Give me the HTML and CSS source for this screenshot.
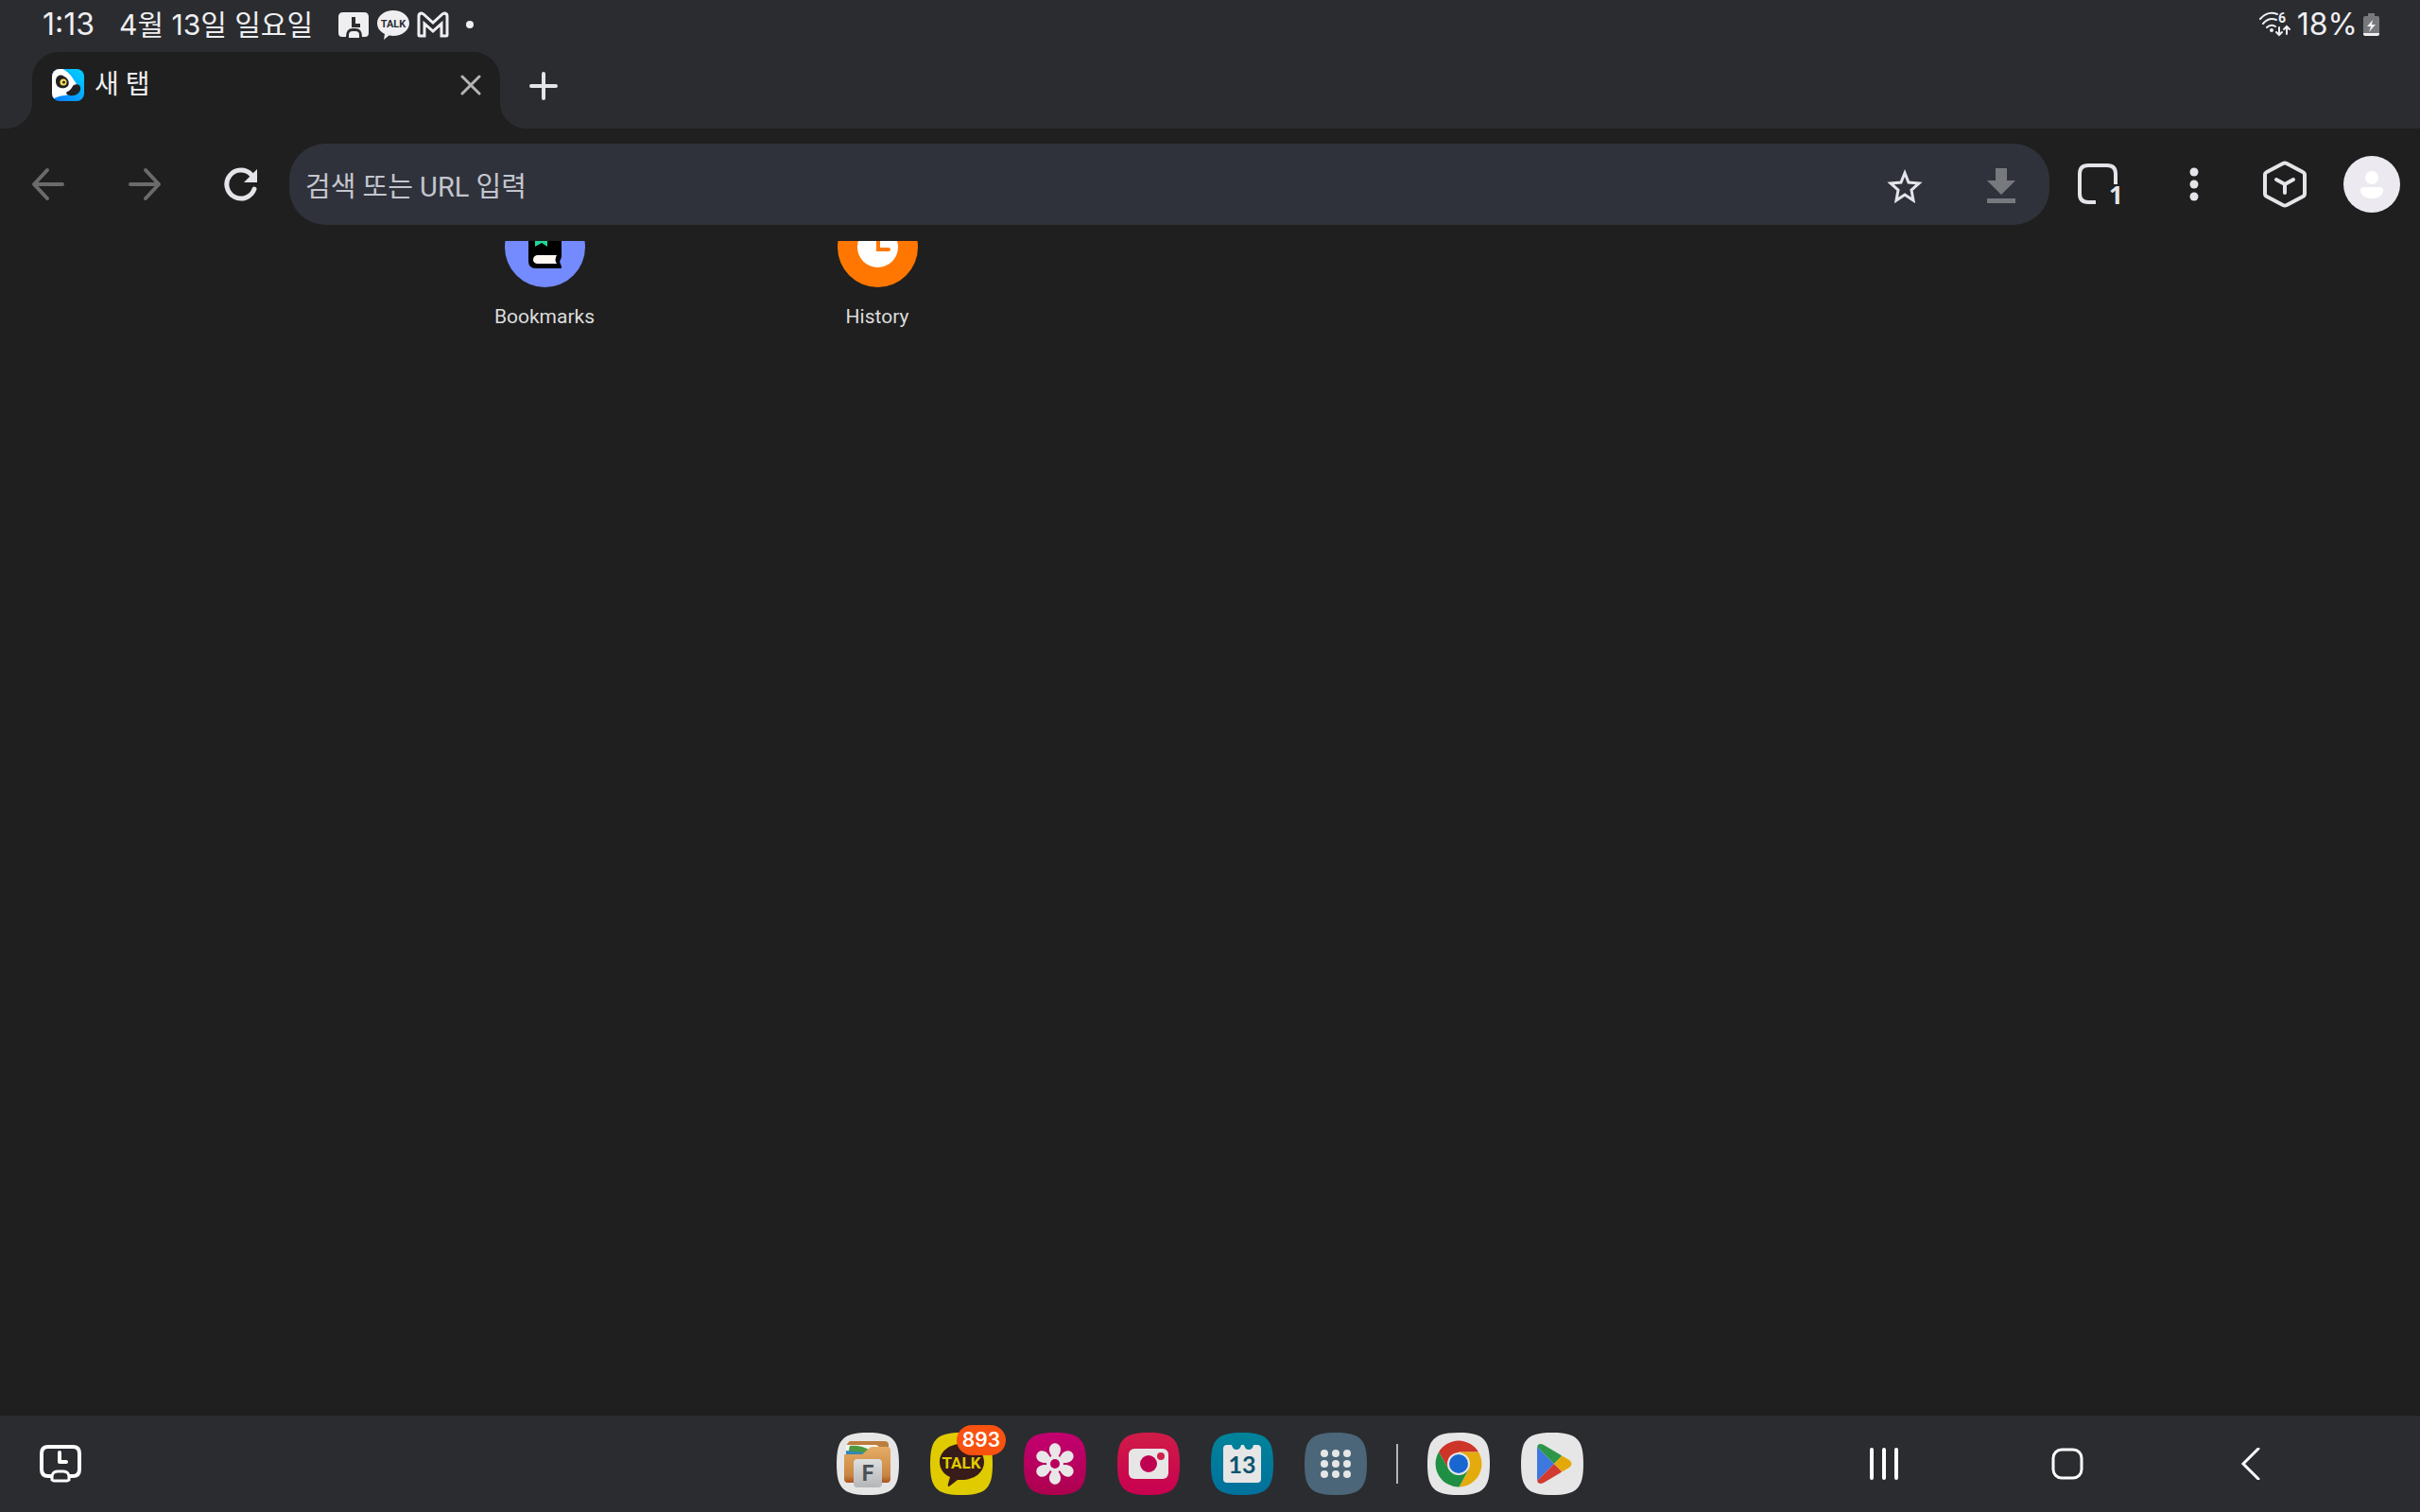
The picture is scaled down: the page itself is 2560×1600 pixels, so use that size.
FILE: index.html
```
<!DOCTYPE html>
<html lang="ko">
<head>
  <meta charset="UTF-8">
  <meta name="viewport" content="width=device-width, initial-scale=1.0">
  <title>새 탭</title>
  <link rel="stylesheet" href="styles.css">
</head>
<body>
  <header class="top">
    <div class="status-bar">
      <span class="clock">1:13</span>
      <span class="date">4월 13일 일요일</span>
      <div class="notifications">
        <svg width="34" height="34" viewBox="0 0 34 34">
          <path fill="#efeff1" fill-rule="evenodd" d="M6 4h22q5 0 5 5v17q0 4-4 4h-3q0-9-7-9h-3q-7 0-7 9H5q-4 0-4-4V9q0-5 5-5zM15 9v11h9v-4h-5V9z"/>
          <path fill="#efeff1" d="M12 31v-3q0-4 4-4h3q4 0 4 4v3z"/>
        </svg>
        <svg width="34" height="34" viewBox="0 0 34 34">
          <path fill="#efeff1" d="M17 2c9.500 0 17 6 17 13.500S26.500 29 17 29c-1.500 0-3 0-4.500-.4L7 33l1-6C3 24.500 0 20.500 0 15.500 0 8 7.500 2 17 2z"/>
          <text class="talk-small" x="17" y="20" text-anchor="middle">TALK</text>
        </svg>
        <svg width="34" height="34" viewBox="0 0 34 34">
          <path class="gmail-line" d="M2 28V8q0-3 3-3l2 1 10 9L27 6l2-1q3 0 3 3v20q0 1-1 1h-5V16l-9 8-9-8v13H3q-1 0-1-1z"/>
        </svg>
        <svg width="34" height="34" viewBox="0 0 34 34">
          <circle cx="14" cy="17" r="4" fill="#efeff1"/>
        </svg>
      </div>
      <div class="battery">
        <svg width="34" height="28" viewBox="0 0 34 28">
          <path class="wifi-line" d="M1 8Q9-1 19 3M4 13q6-7 14-4M8 17q4-4 9-1"/>
          <circle cx="13" cy="20" r="2" fill="#efeff1"/>
          <text class="wifi-gen" x="20" y="12">6</text>
          <path class="wifi-arrow" d="M21 17v8m-3-3 3 3 3-3M29 24v-8m-3 3 3-3 3 3"/>
        </svg>
        <span class="battery-level">18%</span>
        <svg width="17" height="24" viewBox="0 0 17 24">
          <path fill="#77787b" d="M5 0h7v3h3q2 0 2 2v16H0V5q0-2 2-2h3z"/>
          <path fill="#efeff1" d="M0 21h17v1q0 2-2 2H2q-2 0-2-2zM10 7l-6 7h4l-2 6 7-8H9z"/>
        </svg>
      </div>
    </div>
    <div class="tab-strip">
      <div class="tab">
        <svg class="favicon" width="34" height="34" viewBox="0 0 34 34">
          <defs>
            <linearGradient id="favBg" x1="1" y1="0" x2="0" y2="1">
              <stop offset="0" stop-color="#00d5ff"/>
              <stop offset="1" stop-color="#0a78ff"/>
            </linearGradient>
            <clipPath id="favClip"><rect width="34" height="34" rx="8"/></clipPath>
          </defs>
          <g clip-path="url(#favClip)">
            <rect width="34" height="34" fill="url(#favBg)"/>
            <path fill="#fff" d="M0 0h11c5 2 9 6 13 13 4 5 3 10-3 13-7 3-13 1-20 6H0z"/>
            <path fill="#222" d="M4 13c0-6 5-8 9-5 4 2 6 6 4 10-4 4-13 3-13-5z"/>
            <path fill="#222" d="M23 17c4-2 8 0 7 5-1 4-6 7-11 6-3 0-5-3-3-4 4-1 5-5 7-7z"/>
            <circle cx="12" cy="14" r="3.500" fill="#ffdf5c"/>
            <circle cx="12.500" cy="14" r="1.500" fill="#222"/>
          </g>
        </svg>
        <span class="tab-title">새 탭</span>
        <button class="icon-button tab-close" aria-label="탭 닫기">
          <svg width="22" height="22" viewBox="0 0 22 22"><path class="line close-line" d="M2 2l18 18M20 2 2 20"/></svg>
        </button>
      </div>
      <button class="icon-button new-tab" aria-label="새 탭 열기">
        <svg width="30" height="30" viewBox="0 0 30 30"><path class="line" d="M15 2v26M2 15h26"/></svg>
      </button>
    </div>
  </header>

  <div class="toolbar">
    <button class="icon-button nav-button" aria-label="뒤로">
      <svg width="36" height="36" viewBox="0 0 36 36"><path class="line dim" d="M33 18H3M17 3 3 18l14 15"/></svg>
    </button>
    <button class="icon-button nav-button" aria-label="앞으로">
      <svg width="36" height="36" viewBox="0 0 36 36"><path class="line dim" d="M3 18h30M19 3l14 15-14 15"/></svg>
    </button>
    <button class="icon-button nav-button" aria-label="새로고침">
      <svg width="36" height="36" viewBox="0 0 36 36">
        <path class="line reload-line" d="M32 23A15 15 0 1 1 29 8"/>
        <path fill="#e5e4e9" d="M35 2v14H21z"/>
      </svg>
    </button>
    <div class="url-bar">
      <input type="text" class="url-input" placeholder="검색 또는 URL 입력" aria-label="검색 또는 URL 입력">
      <button class="icon-button url-action" aria-label="북마크 추가">
        <svg width="38" height="38" viewBox="0 0 38 38"><path fill="none" stroke="#e5e4e9" stroke-width="3" d="M19 5l4 10 11 1-8 7 2 11-9-6-9 6 2-11-8-7 11-1z"/></svg>
      </button>
      <button class="icon-button url-action" aria-label="다운로드">
        <svg width="38" height="38" viewBox="0 0 38 38"><path fill="#77797e" d="M13 0h12v13h9L19 28 4 13h9zM4 32h30v5H4z"/></svg>
      </button>
    </div>
    <button class="icon-button tool-button" aria-label="탭 1개">
      <svg width="60" height="64" viewBox="-8 -9 60 64">
        <path fill="none" stroke="#e5e4e9" stroke-width="4" d="M20 42h-8q-9 0-9-9V12q0-9 9-9h20q9 0 9 9v11"/>
        <text class="tab-count" x="34" y="44">1</text>
      </svg>
    </button>
    <button class="icon-button tool-button" aria-label="메뉴">
      <svg width="10" height="36" viewBox="0 0 10 36">
        <circle cx="5" cy="5" r="4.500" fill="#e5e4e9"/>
        <circle cx="5" cy="18" r="4.500" fill="#e5e4e9"/>
        <circle cx="5" cy="31" r="4.500" fill="#e5e4e9"/>
      </svg>
    </button>
    <button class="icon-button wallet-button" aria-label="지갑">
      <svg width="48" height="52" viewBox="0 0 48 52">
        <path class="line hex-line" d="M22 4q2-1 4 0l17 9q2 1 2 3v20q0 2-2 3l-17 9q-2 1-4 0L5 39q-2-1-2-3V16q0-2 2-3zM15 21l9 5 9-5M24 26v9"/>
      </svg>
    </button>
    <button class="icon-button avatar" aria-label="프로필">
      <svg width="60" height="60" viewBox="0 0 60 60">
        <circle cx="30" cy="30" r="30" fill="#eceaf0"/>
        <circle cx="30" cy="23" r="7" fill="#fff"/>
        <path fill="#fff" d="M22 33h16q4 0 4 3c0 6-6 9-12 9s-12-3-12-9q0-3 4-3z"/>
      </svg>
    </button>
  </div>

  <main class="page">
    <div class="shortcuts">
      <a href="#bookmarks" class="shortcut">
        <!-- page is scrolled, only the lower part of the circle shows -->
        <svg width="85" height="49" viewBox="0 36 85 49">
          <circle cx="42.500" cy="42.500" r="42.500" fill="#748aff"/>
          <path fill="#000" d="M25 20h35v33l-2 5 2 5v2H33q-8 0-8-8z"/>
          <path fill="#1fd79b" d="M32 20h13v22l-6-4-7 4z"/>
          <path fill="#fff8f2" d="M34 51h21q-3 5 0 9H34q-4-1-4-4 0-4 4-5z"/>
        </svg>
        <span>Bookmarks</span>
      </a>
      <a href="#history" class="shortcut">
        <svg width="85" height="49" viewBox="0 36 85 49">
          <circle cx="42.500" cy="42.500" r="42.500" fill="#ff7700"/>
          <circle cx="42.500" cy="42.500" r="21.500" fill="#fff"/>
          <path class="clock-hands" d="M43 28v17h11"/>
        </svg>
        <span>History</span>
      </a>
    </div>
  </main>

  <footer class="taskbar">
    <button class="icon-button recent-task" aria-label="화면 시간">
      <svg width="44" height="40" viewBox="0 0 44 40">
        <path class="task-line" d="M12 33H9q-7 0-7-7V9q0-7 7-7h26q7 0 7 7v17q0 7-7 7h-3"/>
        <path class="task-line" d="M21 8v10h7"/>
        <path class="task-line thin" d="M13 37q-1-9 6-9h6q7 0 6 9-1 1-2 1H15q-1 0-2-1z"/>
      </svg>
    </button>
    <div class="dock">
      <button class="icon-button app" aria-label="내 파일">
        <svg width="66" height="66" viewBox="0 0 66 66">
          <defs>
            <linearGradient id="folder" x1="0" y1="0" x2="0" y2="1">
              <stop offset="0" stop-color="#e5ac65"/>
              <stop offset="0.8" stop-color="#c98643"/>
              <stop offset="1" stop-color="#a95420"/>
            </linearGradient>
            <linearGradient id="tag" x1="0" y1="0" x2="0" y2="1">
              <stop offset="0" stop-color="#dedfe0"/>
              <stop offset="1" stop-color="#b5b6b8"/>
            </linearGradient>
          </defs>
          <path fill="#e6e6e6" d="M33 0c26 0 33 7 33 33s-7 33-33 33S0 59 0 33 7 0 33 0z"/>
          <path fill="#bd7d3d" d="M12 11q1-2 3-2h36q3 0 4 3v20H10V14z"/>
          <path fill="#f4f4ee" d="M10 13h32l3 2v10H10z"/>
          <path fill="#4c9a3f" d="M14 14q12-1 22 5v4H12z"/>
          <path fill="#3387b7" d="M10 19l20 2v3H10z"/>
          <path fill="url(#folder)" d="M8 23h19l8-7q1-1 3-1h15q4 0 4 4v30q0 4-4 4H12q-4 0-4-4z"/>
          <rect x="18" y="28" width="30" height="30" rx="4" fill="url(#tag)"/>
          <text class="file-letter" x="33" y="51" text-anchor="middle">F</text>
        </svg>
      </button>
      <button class="icon-button app" aria-label="카카오톡, 알림 893개">
        <svg width="66" height="66" viewBox="0 0 66 66">
          <path fill="#e0cb00" d="M33 0c26 0 33 7 33 33s-7 33-33 33S0 59 0 33 7 0 33 0z"/>
          <path fill="#371c19" d="M33 12c14 0 24 8 24 19S47 50 33 50h-4l-9 7q-2 0-1-3l2-7C14 44 10 38 10 31c0-11 10-19 23-19z"/>
          <text class="talk-big" x="33" y="38" text-anchor="middle">TALK</text>
        </svg>
        <span class="badge">893</span>
      </button>
      <button class="icon-button app" aria-label="갤러리">
        <svg width="66" height="66" viewBox="0 0 66 66">
          <defs>
            <linearGradient id="gallery" x1="0" y1="0" x2="0" y2="1">
              <stop offset="0" stop-color="#c30070"/>
              <stop offset="1" stop-color="#ad004f"/>
            </linearGradient>
            <path id="petal" d="M33 29c-3-3-6-7-6-11 0-9 12-9 12 0 0 4-3 8-6 11z"/>
          </defs>
          <path fill="url(#gallery)" d="M33 0c26 0 33 7 33 33s-7 33-33 33S0 59 0 33 7 0 33 0z"/>
          <g fill="#e9e6e8">
            <use href="#petal"/>
            <use href="#petal" transform="rotate(60 33 33)"/>
            <use href="#petal" transform="rotate(120 33 33)"/>
            <use href="#petal" transform="rotate(180 33 33)"/>
            <use href="#petal" transform="rotate(240 33 33)"/>
            <use href="#petal" transform="rotate(300 33 33)"/>
            <circle cx="33" cy="33" r="9"/>
          </g>
          <circle cx="33" cy="33" r="5" fill="#b8005f"/>
        </svg>
      </button>
      <button class="icon-button app" aria-label="카메라">
        <svg width="66" height="66" viewBox="0 0 66 66">
          <defs>
            <linearGradient id="camera" x1="0" y1="0" x2="0" y2="1">
              <stop offset="0" stop-color="#d01c48"/>
              <stop offset="1" stop-color="#c80050"/>
            </linearGradient>
          </defs>
          <path fill="url(#camera)" d="M33 0c26 0 33 7 33 33s-7 33-33 33S0 59 0 33 7 0 33 0z"/>
          <rect x="12" y="17" width="42" height="32" rx="6" fill="#e6e6e6"/>
          <circle cx="33" cy="33" r="9" fill="#bf0050"/>
          <circle cx="46" cy="25" r="4" fill="#cf2249"/>
        </svg>
      </button>
      <button class="icon-button app" aria-label="캘린더">
        <svg width="66" height="66" viewBox="0 0 66 66">
          <defs>
            <linearGradient id="calendar" x1="0" y1="0" x2="0" y2="1">
              <stop offset="0" stop-color="#00839a"/>
              <stop offset="1" stop-color="#00719c"/>
            </linearGradient>
          </defs>
          <path fill="url(#calendar)" d="M33 0c26 0 33 7 33 33s-7 33-33 33S0 59 0 33 7 0 33 0z"/>
          <path fill="#e6e6e6" d="M17 13h5q1 5 5 5t5-5h3q1 5 5 5t5-5h4q4 0 4 4v32q0 4-4 4H17q-4 0-4-4V17q0-4 4-4z"/>
          <text class="cal-day" x="33" y="43" text-anchor="middle">13</text>
        </svg>
      </button>
      <button class="icon-button app" aria-label="앱 목록">
        <svg width="66" height="66" viewBox="0 0 66 66">
          <path fill="#4b6678" d="M33 0c26 0 33 7 33 33s-7 33-33 33S0 59 0 33 7 0 33 0z"/>
          <g fill="#e6e6e6">
            <circle cx="21" cy="22" r="4"/><circle cx="33" cy="22" r="4"/><circle cx="45" cy="22" r="4"/>
            <circle cx="21" cy="33" r="4"/><circle cx="33" cy="33" r="4"/><circle cx="45" cy="33" r="4"/>
            <circle cx="21" cy="44" r="4"/><circle cx="33" cy="44" r="4"/><circle cx="45" cy="44" r="4"/>
          </g>
        </svg>
      </button>
      <span class="dock-divider"></span>
      <button class="icon-button app" aria-label="Chrome">
        <svg width="66" height="66" viewBox="0 0 66 66">
          <path fill="#e6e6e6" d="M33 0c26 0 33 7 33 33s-7 33-33 33S0 59 0 33 7 0 33 0z"/>
          <path fill="#cd3529" d="M33 33 22.600 39 12 20.500A24.500 24.500 0 0 1 54 20.500H33z"/>
          <path fill="#e3ab0b" d="M33 33V20.500H54A24.500 24.500 0 0 1 33.500 57.500L43.500 39z"/>
          <path fill="#1f9043" d="M33 33l10.500 6L33.500 57.500A24.500 24.500 0 0 1 12 20.500L22.600 39z"/>
          <circle cx="33" cy="33" r="12" fill="#e6e6e6"/>
          <circle cx="33" cy="33" r="10" fill="#1a66d0"/>
        </svg>
      </button>
      <button class="icon-button app" aria-label="Play 스토어">
        <svg width="66" height="66" viewBox="0 0 66 66">
          <defs><clipPath id="playClip"><path d="M17 17q0-7 7-4l27 16q5 4 0 8L24 53q-7 3-7-4z"/></clipPath></defs>
          <path fill="#e6e6e6" d="M33 0c26 0 33 7 33 33s-7 33-33 33S0 59 0 33 7 0 33 0z"/>
          <g clip-path="url(#playClip)">
            <path fill="#3d78df" d="M17 15l18 18-18 18z"/>
            <path fill="#2e9648" d="M17 15V8h20l6 17-8 8z"/>
            <path fill="#d13b30" d="M17 51v7h20l6-17-8-8z"/>
            <path fill="#e3a908" d="M35 33l12-12h12v24H47z"/>
          </g>
        </svg>
      </button>
    </div>
    <nav class="system-nav">
      <button class="icon-button" aria-label="최근 앱">
        <svg width="34" height="34" viewBox="0 0 34 34"><path class="sys-line bars" d="M4 2v30M17 2v30M30 2v30"/></svg>
      </button>
      <button class="icon-button" aria-label="홈">
        <svg width="34" height="34" viewBox="0 0 34 34"><rect class="sys-line" x="2" y="2" width="30" height="30" rx="9"/></svg>
      </button>
      <button class="icon-button" aria-label="뒤로 가기">
        <svg width="34" height="34" viewBox="0 0 34 34"><path class="sys-line" d="M25 1 9 17l16 16"/></svg>
      </button>
    </nav>
  </footer>
</body>
</html>
```
FILE: styles.css
```
* {
  box-sizing: border-box;
}
body {
  display: flex;
  flex-direction: column;
  min-height: 100vh;
  margin: 0;
  background-color: #1f1f1f;
  color: #efeff1;
  font-family: Roboto, "Noto Sans CJK KR", sans-serif;
}
svg {
  display: block;
  flex: none;
}
.icon-button {
  display: flex;
  align-items: center;
  justify-content: center;
  padding: 0;
  border: 0;
  background: none;
}

/* Status bar */
.top {
  background-color: #2b2c30;
}
.status-bar {
  display: flex;
  align-items: center;
  height: 55px;
  padding: 0 43px 3px 45px;
  font-family: Inter, "Noto Sans CJK KR", sans-serif;
  font-size: 32px;
  line-height: 36px;
}
.date {
  margin-left: 26px;
  font-size: 30px;
}
.notifications {
  display: flex;
  gap: 8px;
  margin-left: 26px;
}
.battery {
  display: flex;
  align-items: center;
  gap: 6px;
  margin-left: auto;
}
.talk-small {
  font: bold 11px Roboto, sans-serif;
  fill: #2b2c30;
}
.gmail-line {
  fill: none;
  stroke: #efeff1;
  stroke-width: 3;
}
.wifi-line, .wifi-arrow {
  fill: none;
  stroke: #efeff1;
  stroke-width: 2;
  stroke-linecap: round;
}
.wifi-gen {
  font: bold 14px Roboto, sans-serif;
  fill: #efeff1;
}

/* Tabs */
.tab-strip {
  display: flex;
  height: 81px;
  padding-left: 34px;
}
.tab {
  position: relative;
  display: flex;
  align-items: center;
  width: 495px;
  padding: 0 20px 12px 21px;
  border-radius: 28px 28px 0 0;
  background-color: #1f1f1f;
}
/* curved feet at the bottom corners of the active tab */
.tab::before, .tab::after {
  content: "";
  position: absolute;
  bottom: 0;
  width: 28px;
  height: 28px;
}
.tab::before {
  right: 100%;
  background: radial-gradient(circle at 0 0, transparent 28px, #1f1f1f 28px);
}
.tab::after {
  left: 100%;
  background: radial-gradient(circle at 100% 0, transparent 28px, #1f1f1f 28px);
}
.tab-title {
  flex: 1;
  margin-left: 11px;
  font-size: 28px;
  line-height: 36px;
}
.new-tab {
  width: 92px;
  height: 72px;
}
.line {
  fill: none;
  stroke: #e5e4e9;
  stroke-width: 4;
  stroke-linecap: round;
  stroke-linejoin: round;
}
.close-line {
  stroke: #b5b5b7;
  stroke-width: 3;
}
.dim {
  stroke: #6b6b6b;
}
.reload-line {
  stroke-width: 5;
}

/* Toolbar */
.toolbar {
  display: flex;
  align-items: center;
  padding: 16px 21px 17px 0;
}
.nav-button {
  width: 102px;
  height: 86px;
}
.url-bar {
  display: flex;
  flex: 1;
  height: 86px;
  border-radius: 38px;
  background-color: #2f323a;
}
.url-input {
  flex: 1;
  min-width: 0;
  padding: 6px 0 0 17px;
  border: 0;
  outline: 0;
  background: none;
  color: #efeff1;
  font: 29px Roboto, "Noto Sans CJK KR", sans-serif;
}
.url-input::placeholder {
  color: #c3c5cf;
  opacity: 1;
}
.url-action {
  width: 102px;
  padding-top: 4px;
}
.tool-button {
  width: 102px;
  height: 86px;
}
.wallet-button {
  width: 90px;
  height: 86px;
}
.avatar {
  margin-left: 17px;
}
.tab-count {
  font: bold 26px "Open Sans", sans-serif;
  fill: #e5e4e9;
}

/* New tab page */
.page {
  flex: 1;
}
.shortcuts {
  display: grid;
  grid-template-columns: repeat(5, 1fr);
  width: 1760px;
  max-width: 100%;
  margin: 0 auto;
}
.shortcut {
  display: flex;
  flex-direction: column;
  align-items: center;
  gap: 17px;
  color: #dcdcdc;
  font-size: 21px;
  line-height: 28px;
  text-decoration: none;
}
.clock-hands {
  fill: none;
  stroke: #ff7700;
  stroke-width: 4;
  stroke-linecap: round;
}

/* Taskbar */
.taskbar {
  display: grid;
  grid-template-columns: 1fr auto 1fr;
  align-items: center;
  height: 102px;
  background-color: #2b2c30;
}
.recent-task {
  justify-self: start;
  margin-left: 42px;
}
.task-line {
  fill: none;
  stroke: #fff;
  stroke-width: 4;
  stroke-linecap: round;
  stroke-linejoin: round;
}
.thin {
  stroke-width: 3;
}
.dock {
  display: flex;
  align-items: center;
  gap: 33px;
}
.app {
  position: relative;
}
.badge {
  position: absolute;
  top: -8px;
  right: -14px;
  padding: 0 6px;
  border-radius: 16px;
  background-color: #f95110;
  color: #fff;
  font: 600 21px/32px Inter, sans-serif;
}
.dock-divider {
  width: 2px;
  height: 42px;
  margin: 0 -2px;
  background-color: #b5b5b7;
}
.talk-big {
  font: bold 17px Roboto, sans-serif;
  fill: #e0cb00;
}
.file-letter {
  font: bold 23px Roboto, sans-serif;
  fill: #4a5055;
}
.cal-day {
  font: bold 25px Lato, sans-serif;
  fill: #0b5470;
}
.system-nav {
  display: flex;
  justify-self: end;
  margin-right: 82px;
}
.system-nav .icon-button {
  width: 194px;
  height: 102px;
}
.sys-line {
  fill: none;
  stroke: #fff;
  stroke-width: 3;
  stroke-linecap: round;
}
.bars {
  stroke-width: 4;
}
```
